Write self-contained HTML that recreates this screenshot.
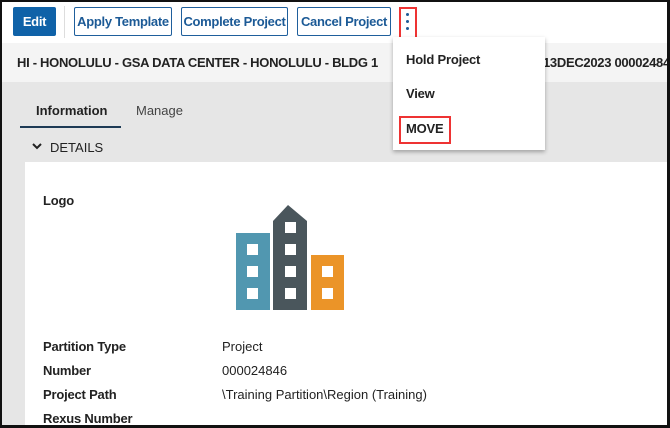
<!DOCTYPE html>
<html><head><style>
*{box-sizing:border-box;margin:0;padding:0}
body{width:670px;height:428px;overflow:hidden;background:#fff;font-family:"Liberation Sans",sans-serif;position:relative}
.frame{position:absolute;left:0;top:0;width:670px;height:428px;border:2px solid #111;border-right-width:3px;border-bottom-width:3px;z-index:10;pointer-events:none}
.abs{position:absolute}
.btn{position:absolute;top:7px;height:29px;border:1px solid #1f5f9c;border-radius:2px;color:#1c5a96;font-size:13px;letter-spacing:-0.3px;white-space:nowrap;font-weight:bold;display:flex;align-items:center;justify-content:center;background:#fff}
.hdr{position:absolute;left:2px;top:43px;width:666px;height:39px;background:#f4f4f4;font-size:13px;letter-spacing:-0.3px;font-weight:bold;color:#222;line-height:39px;white-space:nowrap;overflow:hidden}
.gray{position:absolute;left:2px;top:82px;width:666px;height:346px;background:#e6e6e6}
.card{position:absolute;left:25px;top:162px;width:643px;height:266px;background:#fff}
.lbl{position:absolute;left:43px;font-size:13px;font-weight:bold;color:#222;letter-spacing:-0.2px}
.val{position:absolute;left:222px;font-size:13px;color:#222}
.menu{position:absolute;left:393px;top:37px;width:152px;height:113px;background:#fff;box-shadow:0 2px 4px rgba(0,0,0,.3);z-index:5}
.mi{position:absolute;left:13px;font-size:13px;font-weight:bold;color:#222;letter-spacing:-0.2px}
</style></head><body>
<div class="btn" style="left:13px;width:43px;background:#0f62a8;border-color:#0f62a8;color:#fff">Edit</div>
<div class="abs" style="left:64px;top:6px;width:1px;height:32px;background:#ddd"></div>
<div class="btn" style="left:74px;width:98px">Apply Template</div>
<div class="btn" style="left:181px;width:107px">Complete Project</div>
<div class="btn" style="left:297px;width:94px">Cancel Project</div>
<div class="abs" style="left:399px;top:7px;width:18px;height:34px;border:2px solid #e33"></div>
<div class="abs" style="left:406px;top:13px;width:3px;height:3px;background:#1c5a96;border-radius:50%"></div>
<div class="abs" style="left:406px;top:20px;width:3px;height:3px;background:#1c5a96;border-radius:50%"></div>
<div class="abs" style="left:406px;top:27px;width:3px;height:3px;background:#1c5a96;border-radius:50%"></div>
<div class="hdr"><span class="abs" style="left:15px">HI - HONOLULU - GSA DATA CENTER - HONOLULU - BLDG 1</span><span class="abs" style="left:541px">13DEC2023 000024846</span></div>
<div class="gray"></div>
<div class="abs" style="left:36px;top:103px;font-size:13px;font-weight:bold;color:#222">Information</div>
<div class="abs" style="left:136px;top:103px;font-size:13px;color:#444">Manage</div>
<div class="abs" style="left:20px;top:126px;width:101px;height:2px;background:#1d3a55"></div>
<svg class="abs" style="left:31px;top:141px" width="12" height="10"><path d="M2 3 L6 7 L10 3" stroke="#222" stroke-width="2" fill="none"/></svg>
<div class="abs" style="left:50px;top:140px;font-size:13px;color:#222">DETAILS</div>
<div class="card"></div>
<div class="lbl" style="top:193px">Logo</div>
<svg class="abs" style="left:236px;top:204px" width="110" height="108">
<rect x="0" y="29" width="34" height="77" fill="#5197b0"/>
<path d="M37 17 L52 1 L71 17 L71 106 L37 106 Z" fill="#4a565c"/>
<rect x="75" y="51" width="33" height="55" fill="#eb9428"/>
<g fill="#fff">
<rect x="11" y="40" width="11" height="11"/><rect x="11" y="62" width="11" height="11"/><rect x="11" y="84" width="11" height="11"/>
<rect x="49" y="18" width="11" height="11"/><rect x="49" y="40" width="11" height="11"/><rect x="49" y="62" width="11" height="11"/><rect x="49" y="84" width="11" height="11"/>
<rect x="86" y="62" width="11" height="11"/><rect x="86" y="84" width="11" height="11"/>
</g></svg>
<div class="lbl" style="top:339px">Partition Type</div><div class="val" style="top:339px">Project</div>
<div class="lbl" style="top:363px">Number</div><div class="val" style="top:363px">000024846</div>
<div class="lbl" style="top:387px">Project Path</div><div class="val" style="top:387px">\Training Partition\Region (Training)</div>
<div class="lbl" style="top:411px">Rexus Number</div>
<div class="menu">
<div class="mi" style="top:15px">Hold Project</div>
<div class="mi" style="top:49px">View</div>
<div class="abs" style="left:6px;top:79px;width:52px;height:28px;border:2px solid #e33"></div>
<div class="mi" style="top:84px">MOVE</div>
</div>
<div class="frame"></div>
</body></html>
